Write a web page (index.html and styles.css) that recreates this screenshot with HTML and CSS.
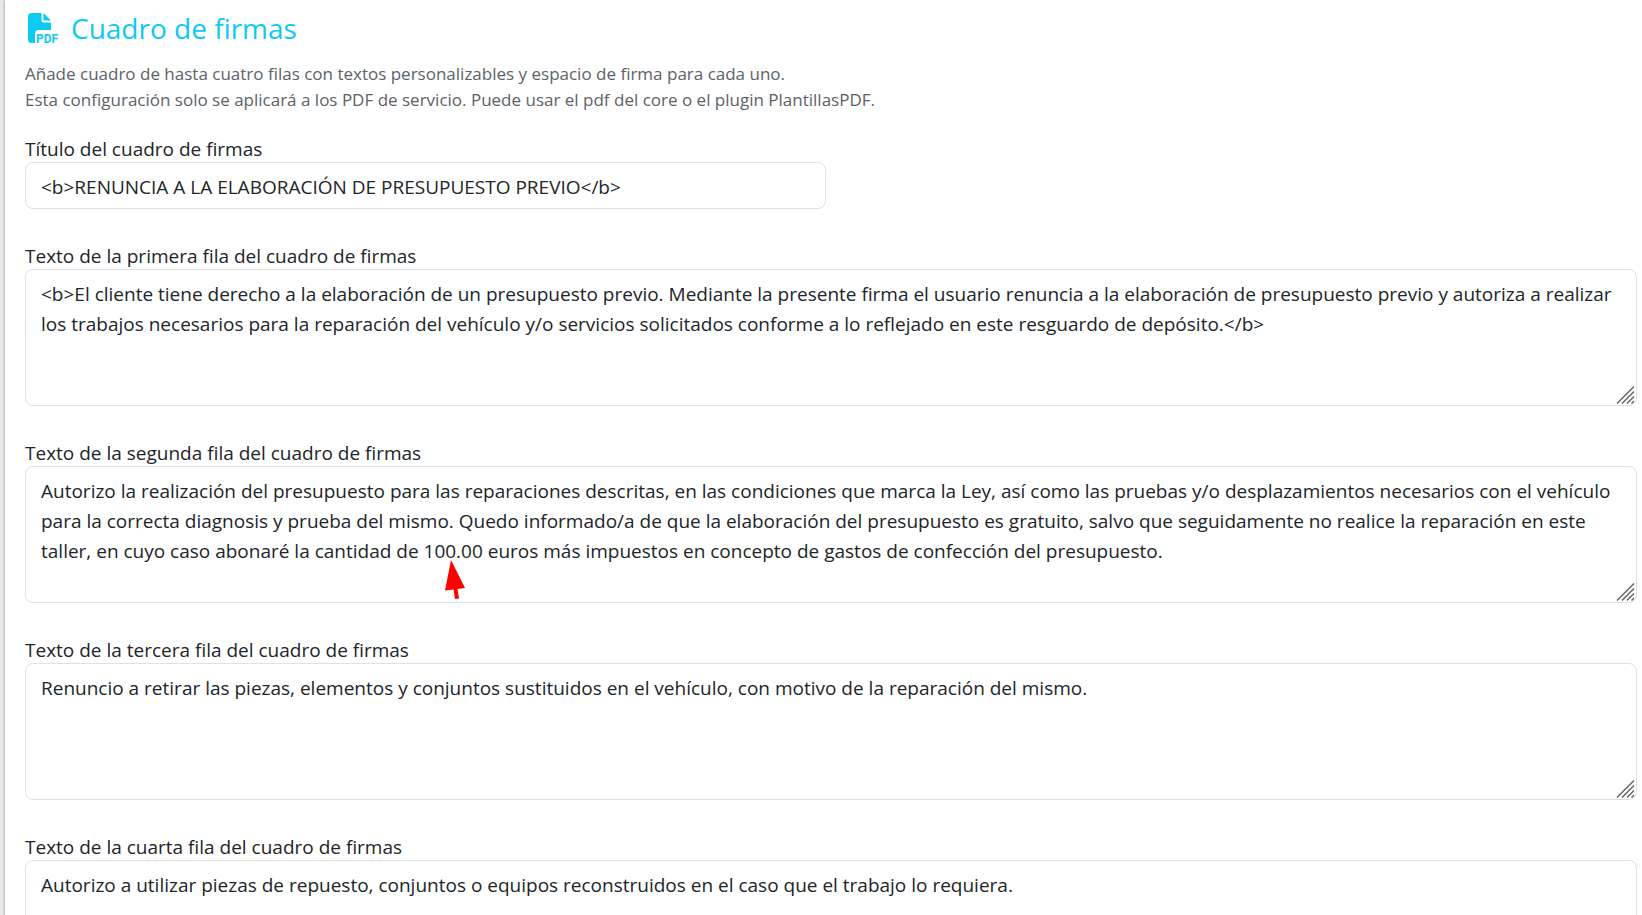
FILE: index.html
```
<!DOCTYPE html>
<html lang="es">
<head>
  <meta charset="UTF-8">
  <meta name="viewport" content="width=device-width, initial-scale=1.0">
  <title>Cuadro de firmas</title>
  <link rel="stylesheet" href="styles.css">
</head>
<body>

<form class="card">
  <h1 class="title">
    <svg class="title-icon" viewBox="0 0 30 30" aria-hidden="true">
      <path d="M3.500 0H13.500V7.500Q13.500 9.500 15.500 9.500H23V17H10.500Q7 17 7 20.500V30H3.500Q0 30 0 26.500V3.500Q0 0 3.500 0Z"/>
      <path d="M15.500 0L23 7.500H15.500Z"/>
      <text x="8" y="29.500">PDF</text>
    </svg>
    Cuadro de firmas
  </h1>
  <p class="help">
    Añade cuadro de hasta cuatro filas con textos personalizables y espacio de firma para cada uno.<br>
    Esta configuración solo se aplicará a los PDF de servicio. Puede usar el pdf del core o el plugin PlantillasPDF.
  </p>

  <div class="row">
    <div class="field">
      <label for="titulo">Título del cuadro de firmas</label>
      <input class="control" type="text" id="titulo" name="titulo" value="&lt;b&gt;RENUNCIA A LA ELABORACIÓN DE PRESUPUESTO PREVIO&lt;/b&gt;">
    </div>
  </div>

  <div class="field">
    <label for="texto1">Texto de la primera fila del cuadro de firmas</label>
    <textarea class="control" id="texto1" name="texto1" rows="4" spellcheck="false">&lt;b&gt;El cliente tiene derecho a la elaboración de un presupuesto previo. Mediante la presente firma el usuario renuncia a la elaboración de presupuesto previo y autoriza a realizar los trabajos necesarios para la reparación del vehículo y/o servicios solicitados conforme a lo reflejado en este resguardo de depósito.&lt;/b&gt;</textarea>
  </div>

  <div class="field">
    <label for="texto2">Texto de la segunda fila del cuadro de firmas</label>
    <textarea class="control" id="texto2" name="texto2" rows="4" spellcheck="false">Autorizo la realización del presupuesto para las reparaciones descritas, en las condiciones que marca la Ley, así como las pruebas y/o desplazamientos necesarios con el vehículo para la correcta diagnosis y prueba del mismo. Quedo informado/a de que la elaboración del presupuesto es gratuito, salvo que seguidamente no realice la reparación en este taller, en cuyo caso abonaré la cantidad de 100.00 euros más impuestos en concepto de gastos de confección del presupuesto.</textarea>
    <svg class="pointer" viewBox="0 0 20 40" aria-hidden="true">
      <path d="M6 0L20 28L12.500 29L14 38.500L10 39L8.500 29.500L0 30.500Z"/>
    </svg>
  </div>

  <div class="field">
    <label for="texto3">Texto de la tercera fila del cuadro de firmas</label>
    <textarea class="control" id="texto3" name="texto3" rows="4" spellcheck="false">Renuncio a retirar las piezas, elementos y conjuntos sustituidos en el vehículo, con motivo de la reparación del mismo.</textarea>
  </div>

  <div class="field">
    <label for="texto4">Texto de la cuarta fila del cuadro de firmas</label>
    <textarea class="control" id="texto4" name="texto4" rows="4" spellcheck="false">Autorizo a utilizar piezas de repuesto, conjuntos o equipos reconstruidos en el caso que el trabajo lo requiera.</textarea>
  </div>
</form>

</body>
</html>
```
FILE: styles.css
```
* {
  box-sizing: border-box;
}

html {
  overflow: hidden;
}

body {
  margin: 0;
  padding-left: 5px;
  background: #e9e9e9;
  color: #212529;
  font-family: "Segoe UI", "Open Sans", "Noto Sans", sans-serif;
  font-size: 19px;
  line-height: 30px;
}

.card {
  padding: 10px 5px 30px 20px;
  background: #fff;
  box-shadow: 0 0 3px rgba(0, 0, 0, 0.4);
}

.title {
  display: flex;
  align-items: center;
  gap: 13px;
  margin: 0 0 15px;
  padding-left: 3px;
  color: #0dcaf0;
  font-size: 28px;
  font-weight: 400;
  line-height: 36px;
}

.title-icon {
  width: 30px;
  height: 30px;
  fill: currentColor;
  overflow: visible;
}

.title-icon text {
  font-family: Roboto, sans-serif;
  font-size: 12px;
  font-weight: 700;
}

.help {
  margin: 0 0 19px;
  color: #5c6268;
  font-size: 17px;
  line-height: 26px;
}

.row {
  display: grid;
  grid-template-columns: 1fr 1fr;
  gap: 10px;
}

.field {
  position: relative;
  margin-bottom: 30px;
}

.field label {
  display: block;
  padding-top: 4px;
  line-height: 26px;
}

.control {
  display: block;
  width: 100%;
  padding: 9px 15px 6px;
  border: 1px solid #dee2e6;
  border-radius: 8px;
  background-color: #fff;
  color: #212529;
  font: inherit;
}

textarea.control {
  resize: vertical;
  overflow: auto;
  background-image: url("data:image/svg+xml,%3Csvg xmlns='http://www.w3.org/2000/svg' width='20' height='20'%3E%3Cpath d='M1 18.500L18 1.500M6 18.500L18 6.500M11 18.500L18 11.500M15.500 18.500L18 16' stroke='%23666' stroke-width='1.500'/%3E%3C/svg%3E");
  background-repeat: no-repeat;
  background-position: right 0 bottom 0;
}

textarea.control::-webkit-resizer {
  display: none;
}

/* red arrow under the amount */
.pointer {
  position: absolute;
  left: 420px;
  top: 124px;
  width: 20px;
  height: 40px;
  fill: #f00;
  pointer-events: none;
}
```
